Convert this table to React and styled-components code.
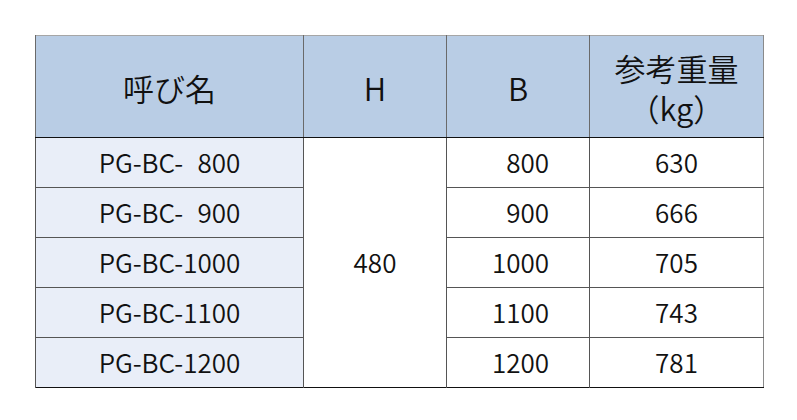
import React from "react";
import styled, { createGlobalStyle } from "styled-components";

const Global = createGlobalStyle`
  html, body { margin: 0; padding: 0; background: #ffffff; }
  body { font-family: "Noto Sans CJK JP", "Noto Sans", sans-serif; color: #111; }
`;

const Page = styled.div`
  padding: 35px 0 0 35px;
`;

const Table = styled.table`
  border-collapse: collapse;
  table-layout: fixed;
  width: 728px;
  border-top: 1px solid #a6a6a6;
  border-left: 1px solid #8a8a8a;
  border-right: 1px solid #8a8a8a;
  border-bottom: 1px solid #111;
`;

const HeadCell = styled.th`
  background: #b9cde5;
  font-weight: 350;
  font-size: 31px;
  line-height: 40px;
  height: 98px;
  padding: 3px 0 0 0;
  text-align: center;
  vertical-align: middle;
  border-left: 1px solid #6a6a6a;
  border-bottom: 1px solid #111;
`;

const Cell = styled.td`
  height: 47px;
  padding: 0 ${(p) => (p.$right ? "40px" : "0")} 2px 0;
  font-size: 26px;
  font-weight: 350;
  line-height: 30px;
  text-align: ${(p) => (p.$right ? "right" : "center")};
  vertical-align: middle;
  background: ${(p) => (p.$tint ? "#e9eef8" : "#ffffff")};
  border-left: 1px solid #555;
  border-top: 1px solid #555;
  white-space: pre;
`;

const rows = [
  { name: "PG-BC-\u2007800", b: "800", w: "630" },
  { name: "PG-BC-\u2007900", b: "900", w: "666" },
  { name: "PG-BC-1000", b: "1000", w: "705" },
  { name: "PG-BC-1100", b: "1100", w: "743" },
  { name: "PG-BC-1200", b: "1200", w: "781" },
];

export default function App() {
  return (
    <Page>
      <Global />
      <Table>
        <colgroup>
          <col style={{ width: 268 }} />
          <col style={{ width: 143 }} />
          <col style={{ width: 143 }} />
          <col style={{ width: 174 }} />
        </colgroup>
        <thead>
          <tr>
            <HeadCell>呼び名</HeadCell>
            <HeadCell>H</HeadCell>
            <HeadCell>B</HeadCell>
            <HeadCell>
              参考重量
              <br />
              （kg）
            </HeadCell>
          </tr>
        </thead>
        <tbody>
          {rows.map((r, i) => (
            <tr key={r.name}>
              <Cell $tint>{r.name}</Cell>
              {i === 0 && <Cell rowSpan={5}>480</Cell>}
              <Cell $right>{r.b}</Cell>
              <Cell>{r.w}</Cell>
            </tr>
          ))}
        </tbody>
      </Table>
    </Page>
  );
}
